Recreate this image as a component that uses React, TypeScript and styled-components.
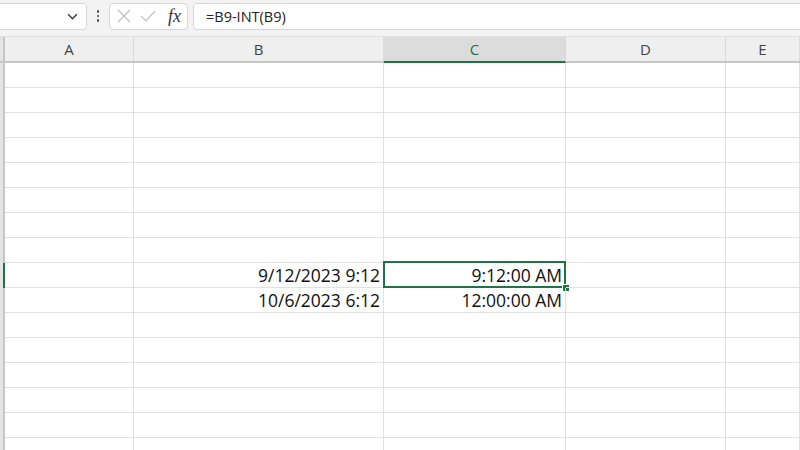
import React from 'react'
import styled, { createGlobalStyle } from 'styled-components'

const GlobalStyle = createGlobalStyle`
  html, body {
    margin: 0;
    padding: 0;
    background: #ffffff;
    overflow: hidden;
  }
  body {
    font-family: "Liberation Sans", Arial, sans-serif;
  }
`;

const COLUMNS = ['A', 'B', 'C', 'D', 'E'];
const SELECTED_COL = 'C';
const SELECTED_ROW = 9;
const ROW_COUNT = 16;

const CELLS: Record<string, string> = {
  B9: '9/12/2023 9:12',
  C9: '9:12:00 AM',
  B10: '10/6/2023 6:12',
  C10: '12:00:00 AM',
};

const App = () => {
  const rows = Array.from({ length: ROW_COUNT }, (_, i) => i + 1);

  return (
    <Page>
      <GlobalStyle />
      <Toolbar>
        <NameBox>
          <ChevronIcon viewBox="0 0 12 12">
            <path d="M2 4 L6 8 L10 4" />
          </ChevronIcon>
        </NameBox>
        <Dots>
          <Dot />
          <Dot />
          <Dot />
        </Dots>
        <FxBox>
          <ActionIcon viewBox="0 0 16 16">
            <path d="M2 2 L14 14 M14 2 L2 14" />
          </ActionIcon>
          <ActionIcon viewBox="0 0 16 16">
            <path d="M1 8 L6 13 L15 3" />
          </ActionIcon>
          <FxLabel>fx</FxLabel>
        </FxBox>
        <FormulaBox>=B9-INT(B9)</FormulaBox>
      </Toolbar>

      <Sheet>
        <HeaderRow>
          <RowHeaderCorner />
          {COLUMNS.map((col) => (
            <ColHeader key={col} selected={col === SELECTED_COL}>{col}</ColHeader>
          ))}
        </HeaderRow>

        {rows.map((row) => (
          <Row key={row}>
            <RowHeader selected={row === SELECTED_ROW} />
            {COLUMNS.map((col) => {
              const id = `${col}${row}`;
              const active = col === SELECTED_COL && row === SELECTED_ROW;
              return (
                <Cell key={id}>
                  {CELLS[id] && <CellText>{CELLS[id]}</CellText>}
                  {active && (
                    <ActiveFrame>
                      <FillHandle />
                    </ActiveFrame>
                  )}
                </Cell>
              );
            })}
          </Row>
        ))}
      </Sheet>
    </Page>
  );
};

export default App;

const Page = styled.div`
  width: 800px;
  height: 450px;
  overflow: hidden;
  background: #ffffff;
`;

const Toolbar = styled.div`
  display: flex;
  align-items: center;
  height: 37px;
  padding-bottom: 4px;
  box-sizing: border-box;
  background: #f3f3f3;
  border-bottom: 1px solid #e3e3e3;
`;

const NameBox = styled.div`
  display: flex;
  align-items: center;
  justify-content: flex-end;
  margin-left: -10px;
  width: 97px;
  height: 27px;
  box-sizing: border-box;
  padding-right: 7px;
  background: #ffffff;
  border: 1px solid #d6d6d6;
  border-radius: 4px;
`;

const ChevronIcon = styled.svg`
  width: 13px;
  height: 13px;
  fill: none;
  stroke: #3a3a3a;
  stroke-width: 1.4;
`;

const Dots = styled.div`
  display: flex;
  flex-direction: column;
  align-items: center;
  gap: 2px;
  width: 22px;
`;

const Dot = styled.span`
  width: 2.5px;
  height: 2.5px;
  border-radius: 50%;
  background: #444444;
`;

const FxBox = styled.div`
  display: flex;
  align-items: center;
  gap: 8px;
  width: 79px;
  height: 27px;
  box-sizing: border-box;
  padding: 0 6px 0 6px;
  background: #ffffff;
  border: 1px solid #d6d6d6;
  border-radius: 4px;
`;

const ActionIcon = styled.svg`
  width: 16px;
  height: 16px;
  fill: none;
  stroke: #c2c2c2;
  stroke-width: 1.2;
`;

const FxLabel = styled.span`
  margin-left: 4px;
  font-family: "Liberation Serif", "Times New Roman", serif;
  font-style: italic;
  font-size: 18px;
  color: #333333;
`;

const FormulaBox = styled.div`
  display: flex;
  align-items: center;
  flex: 1;
  height: 27px;
  margin-left: 5px;
  margin-right: -10px;
  padding-left: 12px;
  box-sizing: border-box;
  background: #ffffff;
  border: 1px solid #d6d6d6;
  border-radius: 4px;
  font-family: "Open Sans", "Liberation Sans", sans-serif;
  font-size: 14.5px;
  color: #222222;
`;

const Sheet = styled.div`
  display: flex;
  flex-direction: column;
`;

const GRID = `5px 129px 250px 182px 160px 1fr`;

const HeaderRow = styled.div`
  display: grid;
  grid-template-columns: ${GRID};
  height: 24px;
  background: #efefef;
  border-bottom: 2px solid #c6c6c6;
`;

const RowHeaderCorner = styled.div`
  box-sizing: border-box;
  background: #e4e4e4;
  border-right: 2px solid #c6c6c6;
`;

const ColHeader = styled.div<{ selected?: boolean }>`
  display: flex;
  align-items: center;
  justify-content: center;
  box-sizing: border-box;
  border-right: 1px solid #dadada;
  font-family: "Open Sans", "Liberation Sans", sans-serif;
  font-size: 15px;
  color: ${(p) => (p.selected ? '#217346' : '#444444')};
  background: ${(p) => (p.selected ? '#dcdcdc' : 'transparent')};
  margin-bottom: ${(p) => (p.selected ? '-2px' : '0')};
  border-bottom: ${(p) => (p.selected ? '2px solid #217346' : 'none')};
`;

const Row = styled.div`
  display: grid;
  grid-template-columns: ${GRID};
  height: 25px;
`;

const RowHeader = styled.div<{ selected?: boolean }>`
  box-sizing: border-box;
  background: #e4e4e4;
  border-right: 2px solid ${(p) => (p.selected ? '#217346' : '#c6c6c6')};
`;

const Cell = styled.div`
  position: relative;
  display: flex;
  align-items: center;
  justify-content: flex-end;
  box-sizing: border-box;
  padding-right: 3px;
  border-right: 1px solid #e1e1e1;
  border-bottom: 1px solid #e1e1e1;
`;

const CellText = styled.span`
  font-family: "Open Sans", "Liberation Sans", sans-serif;
  font-size: 17.5px;
  color: #111111;
  white-space: nowrap;
`;

const ActiveFrame = styled.div`
  position: absolute;
  left: -1px;
  top: -2px;
  right: -1px;
  bottom: -1px;
  border: 2px solid #217346;
  pointer-events: none;
`;

const FillHandle = styled.span`
  position: absolute;
  display: block;
  right: -5px;
  bottom: -5px;
  width: 6px;
  height: 6px;
  background: #217346;
  box-shadow: -1px -1px 0 #ffffff;
`;
